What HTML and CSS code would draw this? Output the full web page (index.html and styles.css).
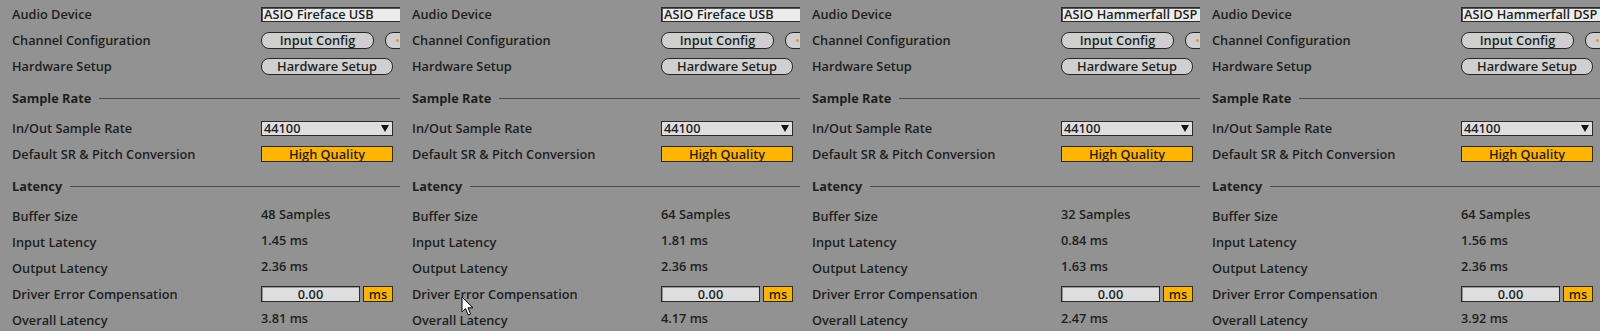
FILE: index.html
```html
<!DOCTYPE html>
<html lang="en">
<head>
  <meta charset="UTF-8">
  <meta name="viewport" content="width=device-width, initial-scale=1.0">
  <title>Audio Preferences</title>
  <link rel="stylesheet" href="styles.css">
</head>
<body>
  <div class="prefs">

    <section class="panel">
      <div class="row"><span class="label">Audio Device</span><div class="ctrl"><div class="field device">ASIO Fireface USB</div></div></div>
      <div class="row"><span class="label">Channel Configuration</span><div class="ctrl"><button class="pill">Input Config</button><button class="pill pill-cut" aria-label="Output Config"><span class="dot"></span></button></div></div>
      <div class="row"><span class="label">Hardware Setup</span><div class="ctrl"><button class="pill pill-wide">Hardware Setup</button></div></div>
      <div class="heading">Sample Rate</div>
      <div class="row"><span class="label">In/Out Sample Rate</span><div class="ctrl"><div class="field select">44100<span class="arrow"></span></div></div></div>
      <div class="row"><span class="label">Default SR &amp; Pitch Conversion</span><div class="ctrl"><div class="toggle">High Quality</div></div></div>
      <div class="heading">Latency</div>
      <div class="row"><span class="label">Buffer Size</span><div class="ctrl"><span class="value">48 Samples</span></div></div>
      <div class="row"><span class="label">Input Latency</span><div class="ctrl"><span class="value">1.45 ms</span></div></div>
      <div class="row"><span class="label">Output Latency</span><div class="ctrl"><span class="value">2.36 ms</span></div></div>
      <div class="row"><span class="label">Driver Error Compensation</span><div class="ctrl"><div class="field number">0.00</div><div class="unit">ms</div></div></div>
      <div class="row"><span class="label">Overall Latency</span><div class="ctrl"><span class="value">3.81 ms</span></div></div>
    </section>

    <section class="panel">
      <div class="row"><span class="label">Audio Device</span><div class="ctrl"><div class="field device">ASIO Fireface USB</div></div></div>
      <div class="row"><span class="label">Channel Configuration</span><div class="ctrl"><button class="pill">Input Config</button><button class="pill pill-cut" aria-label="Output Config"><span class="dot"></span></button></div></div>
      <div class="row"><span class="label">Hardware Setup</span><div class="ctrl"><button class="pill pill-wide">Hardware Setup</button></div></div>
      <div class="heading">Sample Rate</div>
      <div class="row"><span class="label">In/Out Sample Rate</span><div class="ctrl"><div class="field select">44100<span class="arrow"></span></div></div></div>
      <div class="row"><span class="label">Default SR &amp; Pitch Conversion</span><div class="ctrl"><div class="toggle">High Quality</div></div></div>
      <div class="heading">Latency</div>
      <div class="row"><span class="label">Buffer Size</span><div class="ctrl"><span class="value">64 Samples</span></div></div>
      <div class="row"><span class="label">Input Latency</span><div class="ctrl"><span class="value">1.81 ms</span></div></div>
      <div class="row"><span class="label">Output Latency</span><div class="ctrl"><span class="value">2.36 ms</span></div></div>
      <div class="row"><span class="label">Driver Error Compensation</span><div class="ctrl"><div class="field number">0.00</div><div class="unit">ms</div></div></div>
      <div class="row"><span class="label">Overall Latency</span><div class="ctrl"><span class="value">4.17 ms</span></div></div>
    </section>

    <section class="panel">
      <div class="row"><span class="label">Audio Device</span><div class="ctrl"><div class="field device">ASIO Hammerfall DSP</div></div></div>
      <div class="row"><span class="label">Channel Configuration</span><div class="ctrl"><button class="pill">Input Config</button><button class="pill pill-cut" aria-label="Output Config"><span class="dot"></span></button></div></div>
      <div class="row"><span class="label">Hardware Setup</span><div class="ctrl"><button class="pill pill-wide">Hardware Setup</button></div></div>
      <div class="heading">Sample Rate</div>
      <div class="row"><span class="label">In/Out Sample Rate</span><div class="ctrl"><div class="field select">44100<span class="arrow"></span></div></div></div>
      <div class="row"><span class="label">Default SR &amp; Pitch Conversion</span><div class="ctrl"><div class="toggle">High Quality</div></div></div>
      <div class="heading">Latency</div>
      <div class="row"><span class="label">Buffer Size</span><div class="ctrl"><span class="value">32 Samples</span></div></div>
      <div class="row"><span class="label">Input Latency</span><div class="ctrl"><span class="value">0.84 ms</span></div></div>
      <div class="row"><span class="label">Output Latency</span><div class="ctrl"><span class="value">1.63 ms</span></div></div>
      <div class="row"><span class="label">Driver Error Compensation</span><div class="ctrl"><div class="field number">0.00</div><div class="unit">ms</div></div></div>
      <div class="row"><span class="label">Overall Latency</span><div class="ctrl"><span class="value">2.47 ms</span></div></div>
    </section>

    <section class="panel">
      <div class="row"><span class="label">Audio Device</span><div class="ctrl"><div class="field device">ASIO Hammerfall DSP</div></div></div>
      <div class="row"><span class="label">Channel Configuration</span><div class="ctrl"><button class="pill">Input Config</button><button class="pill pill-cut" aria-label="Output Config"><span class="dot"></span></button></div></div>
      <div class="row"><span class="label">Hardware Setup</span><div class="ctrl"><button class="pill pill-wide">Hardware Setup</button></div></div>
      <div class="heading">Sample Rate</div>
      <div class="row"><span class="label">In/Out Sample Rate</span><div class="ctrl"><div class="field select">44100<span class="arrow"></span></div></div></div>
      <div class="row"><span class="label">Default SR &amp; Pitch Conversion</span><div class="ctrl"><div class="toggle">High Quality</div></div></div>
      <div class="heading">Latency</div>
      <div class="row"><span class="label">Buffer Size</span><div class="ctrl"><span class="value">64 Samples</span></div></div>
      <div class="row"><span class="label">Input Latency</span><div class="ctrl"><span class="value">1.56 ms</span></div></div>
      <div class="row"><span class="label">Output Latency</span><div class="ctrl"><span class="value">2.36 ms</span></div></div>
      <div class="row"><span class="label">Driver Error Compensation</span><div class="ctrl"><div class="field number">0.00</div><div class="unit">ms</div></div></div>
      <div class="row"><span class="label">Overall Latency</span><div class="ctrl"><span class="value">3.92 ms</span></div></div>
    </section>

    <!-- mouse pointer over the second panel -->
    <svg class="cursor" width="14" height="21" viewBox="0 0 14 21">
      <path d="M1 1 L1 16 L4.5 12.5 L7.2 19 L9.6 18 L7 11.8 L12 11.8 Z" fill="#fff" stroke="#000" stroke-width="1" stroke-linejoin="round"/>
    </svg>
  </div>
</body>
</html>
```

FILE: styles.css
```css
/* Global */
body {
  margin: 0;
  padding: 0;
  background-color: #929292;
  font-family: 'Open Sans', 'Liberation Sans', Arial, sans-serif;
  font-size: 12.75px;
  font-weight: 600;
  color: #1e1e1e;
}

.prefs {
  position: relative;
  display: flex;
  height: 331px;
  overflow: hidden;
}

/* One preferences column */
.panel {
  width: 400px;
  flex: none;
  box-sizing: border-box;
  padding: 1px 0 0 12px;
  overflow: hidden;
}

.row {
  display: grid;
  grid-template-columns: 249px 1fr;
  align-items: center;
  height: 26px;
  white-space: nowrap;
}
.ctrl {
  display: flex;
  align-items: center;
  gap: 11px;
}

/* Section headings with rule */
.heading {
  display: flex;
  align-items: center;
  box-sizing: border-box;
  height: 36px;
  padding-top: 2px;
  font-weight: 700;
}
.heading::after {
  content: "";
  flex: 1;
  height: 1px;
  margin-left: 8px;
  background: #4b4b4b;
}

/* Controls */
.field {
  box-sizing: border-box;
  height: 15px;
  line-height: 13px;
  border: 1px solid #2a2a2a;
  background: #dedede;
  padding: 0 2px;
  flex: none;
}
.device {
  width: 150px;
  background: #ececec;
  box-shadow: inset 1px 1px 0 #555;
}
.select {
  width: 132px;
  display: flex;
  justify-content: space-between;
  align-items: center;
}
.arrow {
  width: 0;
  height: 0;
  margin-right: 1px;
  border-left: 4px solid transparent;
  border-right: 4px solid transparent;
  border-top: 7px solid #111;
}
.number {
  width: 99px;
  height: 16px;
  text-align: center;
  line-height: 14px;
  box-shadow: inset 1px 1px 0 #999;
}
.unit {
  box-sizing: border-box;
  width: 30px;
  height: 16px;
  margin-left: -8px;
  line-height: 14px;
  text-align: center;
  background: #ffb400;
  border: 1px solid #2a2a2a;
}
.toggle {
  box-sizing: border-box;
  width: 132px;
  height: 16px;
  line-height: 14px;
  text-align: center;
  background: #ffb400;
  border: 1px solid #2a2a2a;
}

.pill {
  box-sizing: border-box;
  flex: none;
  width: 113px;
  height: 17px;
  padding: 0;
  font: inherit;
  line-height: 15px;
  color: inherit;
  background: #cfcfcf;
  border: 1px solid #262626;
  border-radius: 8px;
}
.pill-wide { width: 132px; }
.pill-cut {
  display: flex;
  align-items: center;
  padding-left: 10px;
}
.dot {
  width: 3px;
  height: 3px;
  border-radius: 50%;
  background: #d79a2c;
}

.value {
  margin-bottom: 5px;
}

/* Pointer overlay */
.cursor {
  position: absolute;
  left: 461px;
  top: 296px;
}
```
